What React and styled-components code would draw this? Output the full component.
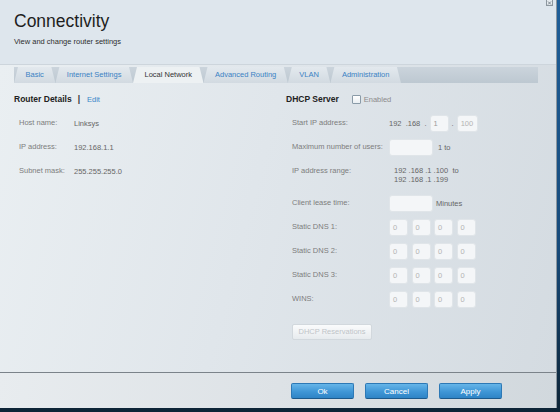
import React from "react";
import styled, { createGlobalStyle } from "styled-components";

const GlobalStyle = createGlobalStyle`
  html, body {
    margin: 0;
    padding: 0;
  }
  body {
    background: #0d2233;
    font-family: "Liberation Sans", Arial, sans-serif;
  }
`;

const Screen = styled.div`
  width: 560px;
  height: 412px;
  background: linear-gradient(180deg, #1f5f99 0%, #174b7b 60%, #0d2436 100%);
  overflow: hidden;
`;

const Dialog = styled.div`
  width: 556px;
  height: 408px;
  border-right: 1px solid #8c969e;
  display: flex;
  flex-direction: column;
`;

const Header = styled.div`
  position: relative;
  height: 64px;
  padding: 0 14px;
  background: #dee6ed;
  border-bottom: 1px solid #cdd5dc;
`;

const Title = styled.h1`
  margin: 0;
  padding-top: 11px;
  font-size: 17.5px;
  line-height: 20px;
  font-weight: normal;
  color: #1e1e1e;
`;

const Subtitle = styled.div`
  margin-top: 6px;
  font-size: 7.5px;
  line-height: 10px;
  color: #2e2e2e;
`;

const Close = styled.svg`
  position: absolute;
  top: 0;
  right: 3px;
`;

const Body = styled.div`
  flex: 1;
  display: flex;
  flex-direction: column;
  background: linear-gradient(105deg, #eaeff2 0%, #e0e6eb 45%, #d4dbe1 100%);
`;

const TabBar = styled.div`
  margin: 2px 18px 0 14px;
  height: 16px;
  display: flex;
  background: linear-gradient(180deg, #cbd4dc, #bdc8d1);
`;

const Tab = styled.div`
  height: 16px;
  padding: 0 11.5px;
  font-size: 7.5px;
  line-height: 16px;
  white-space: nowrap;
  color: ${p => (p.$active ? "#333" : "#3a82c4")};
  background: ${p =>
    p.$active
      ? "#edf1f3"
      : "linear-gradient(180deg, #e3e9ee, #d2dae1)"};
  clip-path: polygon(4px 0, calc(100% - 4px) 0, 100% 100%, 0 100%);
`;

const Columns = styled.div`
  display: flex;
  padding: 8px 0 0 14px;
`;

const Column = styled.div`
  width: ${p => (p.$width ? `${p.$width}px` : "auto")};
  flex: ${p => (p.$width ? "none" : 1)};
`;

const Heading = styled.div`
  display: flex;
  align-items: center;
  height: 16px;
  margin-bottom: 4px;
  font-size: 8.5px;
  font-weight: bold;
  color: #222;
`;

const Divider = styled.span`
  margin: 0 7px 0 6px;
  color: #333;
`;

const EditLink = styled.a`
  font-weight: normal;
  font-size: 7.5px;
  color: #3b87c8;
  text-decoration: none;
`;

const Check = styled.span`
  width: 7px;
  height: 7px;
  margin-left: 13px;
  border: 1px solid #8a9ba8;
  border-radius: 1px;
  background: linear-gradient(180deg, #ffffff, #e9eef2);
`;

const CheckLabel = styled.span`
  margin-left: 3px;
  font-size: 7.5px;
  font-weight: normal;
  color: #8c8c8c;
`;

const Rows = styled.div`
  padding-left: ${p => p.$indent}px;
`;

const Row = styled.div`
  display: flex;
  align-items: flex-start;
  min-height: ${p => (p.$tall ? 32 : 24)}px;
`;

const Label = styled.div`
  width: ${p => p.$width}px;
  flex: none;
  font-size: 7.5px;
  line-height: 24px;
  color: #7d7d7d;
  white-space: nowrap;
`;

const Value = styled.div`
  display: flex;
  align-items: center;
  height: 24px;
  font-size: 7.5px;
  color: #666;
  white-space: pre;
`;

const Range = styled.div`
  padding: 8px 0 0 5px;
  font-size: 7.5px;
  line-height: 8.5px;
  color: #666;
  white-space: pre;
`;

const Input = styled.div`
  box-sizing: border-box;
  width: ${p => p.$w}px;
  height: 17px;
  margin-right: ${p => p.$gap || 0}px;
  padding-left: 3px;
  font-size: 7.5px;
  line-height: 15px;
  color: ${p => p.$color || "#b3b3b3"};
  background: #f4f6f8;
  border: 1px solid #e0e5e9;
  border-radius: 3px;
`;

const Dot = styled.span`
  margin: 0 ${p => p.$space}px;
`;

const Unit = styled.span`
  margin-left: ${p => p.$space}px;
`;

const GhostButton = styled.div`
  box-sizing: border-box;
  width: 80px;
  height: 16px;
  margin: 13px 0 0 6px;
  font-size: 7.5px;
  line-height: 14px;
  text-align: center;
  color: #bfc4c8;
  background: linear-gradient(180deg, #fafbfc, #e7ebee);
  border: 1px solid #d2d8dd;
  border-radius: 2px;
`;

const Footer = styled.div`
  height: 35px;
  border-top: 1px solid #7b838a;
  display: flex;
  align-items: center;
  justify-content: flex-end;
  gap: 11px;
  padding-right: 54px;
  background: linear-gradient(100deg, #e8ecef 0%, #dde2e6 50%, #d1d8dd 100%);
`;

const Button = styled.div`
  box-sizing: border-box;
  width: 63px;
  height: 16px;
  font-size: 8px;
  line-height: 15px;
  text-align: center;
  color: #fff;
  background: linear-gradient(180deg, #66b5e8 0%, #3f96d6 55%, #2f84c6 100%);
  border: 1px solid #2d79b6;
  border-bottom-color: #1d5a8c;
  border-radius: 2px;
`;

const tabs = [
  "Basic",
  "Internet Settings",
  "Local Network",
  "Advanced Routing",
  "VLAN",
  "Administration"
];

const routerInfo = [
  ["Host name:", "Linksys"],
  ["IP address:", "192.168.1.1"],
  ["Subnet mask:", "255.255.255.0"]
];

const dnsRows = ["Static DNS 1:", "Static DNS 2:", "Static DNS 3:", "WINS:"];

const Quad = () => (
  <Value>
    {[0, 1, 2, 3].map(i => (
      <Input key={i} $w={19} $gap={i < 3 ? 3.5 : 0}>
        0
      </Input>
    ))}
  </Value>
);

export default function App() {
  return (
    <Screen>
      <GlobalStyle />
      <Dialog>
        <Header>
          <Title>Connectivity</Title>
          <Subtitle>View and change router settings</Subtitle>
          <Close width="7" height="6" viewBox="0 0 7 6">
            <rect x="0.5" y="-0.5" width="6" height="6" fill="#e6ebef" stroke="#8d979f" />
            <path d="M2 1.5 L5 4.5 M5 1.5 L2 4.5" stroke="#6f7a83" strokeWidth="0.9" />
          </Close>
        </Header>

        <Body>
          <TabBar>
            {tabs.map(t => (
              <Tab key={t} $active={t === "Local Network"}>
                {t}
              </Tab>
            ))}
          </TabBar>

          <Columns>
            <Column $width={272}>
              <Heading>
                Router Details
                <Divider>|</Divider>
                <EditLink href="#">Edit</EditLink>
              </Heading>
              <Rows $indent={5}>
                {routerInfo.map(([label, value]) => (
                  <Row key={label}>
                    <Label $width={55}>{label}</Label>
                    <Value>{value}</Value>
                  </Row>
                ))}
              </Rows>
            </Column>

            <Column>
              <Heading>
                DHCP Server
                <Check />
                <CheckLabel>Enabled</CheckLabel>
              </Heading>
              <Rows $indent={6}>
                <Row>
                  <Label $width={97}>Start IP address:</Label>
                  <Value>
                    {"192  .168  ."}
                    <Input $w={19} $color="#9a9a9a" style={{ marginLeft: 3 }}>
                      1
                    </Input>
                    <Dot $space={3}>.</Dot>
                    <Input $w={21}>100</Input>
                  </Value>
                </Row>
                <Row>
                  <Label $width={97}>Maximum number of users:</Label>
                  <Value>
                    <Input $w={44} />
                    <Unit $space={5}>1 to</Unit>
                  </Value>
                </Row>
                <Row $tall>
                  <Label $width={97}>IP address range:</Label>
                  <Range>
                    {"192 .168 .1 .100  to\n192 .168 .1 .199"}
                  </Range>
                </Row>
                <Row>
                  <Label $width={97}>Client lease time:</Label>
                  <Value>
                    <Input $w={44} />
                    <Unit $space={3}>Minutes</Unit>
                  </Value>
                </Row>
                {dnsRows.map(label => (
                  <Row key={label}>
                    <Label $width={97}>{label}</Label>
                    <Quad />
                  </Row>
                ))}
              </Rows>
              <GhostButton>DHCP Reservations</GhostButton>
            </Column>
          </Columns>
        </Body>

        <Footer>
          <Button>Ok</Button>
          <Button>Cancel</Button>
          <Button>Apply</Button>
        </Footer>
      </Dialog>
    </Screen>
  );
}
